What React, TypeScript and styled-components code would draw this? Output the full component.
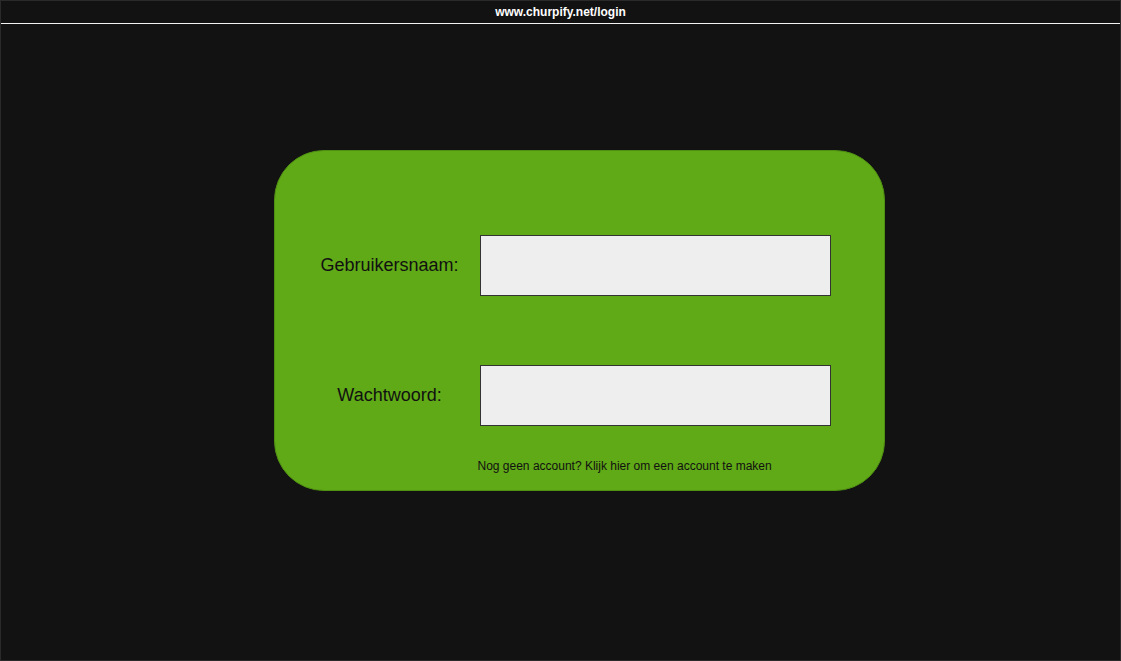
import styled, { createGlobalStyle } from 'styled-components';

const GlobalStyle = createGlobalStyle`
  html, body {
    margin: 0;
    padding: 0;
    background: #121212;
  }
  body {
    font-family: "Liberation Sans", Arial, sans-serif;
  }
`;

const Page = styled.div`
  box-sizing: border-box;
  width: 1121px;
  height: 661px;
  background: #121212;
  border: 1px solid #2a2a2a;
  display: flex;
  flex-direction: column;
`;

const AddressBar = styled.header`
  height: 22px;
  border-bottom: 1px solid #f2f2f2;
  display: flex;
  align-items: center;
  justify-content: center;
  color: #ffffff;
  font-size: 12px;
  font-weight: bold;
`;

const Stage = styled.main`
  flex: 1;
  display: flex;
  justify-content: center;
  padding: 126px 0 0 0;
  box-sizing: border-box;
`;

const Card = styled.form`
  box-sizing: border-box;
  width: 611px;
  height: 341px;
  margin-left: 37px;
  background: #60a917;
  border: 1px solid #4f8f12;
  border-radius: 50px;
  padding: 84px 53px 0 25px;
  display: grid;
  grid-template-columns: 180px 351px;
  grid-auto-rows: min-content;
  row-gap: 69px;
  align-items: center;
`;

const Label = styled.label`
  font-size: 18px;
  color: #111;
  text-align: center;
`;

const Field = styled.input`
  box-sizing: border-box;
  width: 351px;
  height: 61px;
  margin: 0;
  background: #eeeeee;
  border: 1px solid #333333;
  outline: none;
`;

const Hint = styled.a`
  grid-column: 2;
  margin-top: -58px;
  margin-left: -2px;
  font-size: 12px;
  line-height: 14px;
  color: #111;
  text-decoration: none;
  cursor: pointer;
`;

export default function App() {
  return (
    <>
      <GlobalStyle />
      <Page>
        <AddressBar>www.churpify.net/login</AddressBar>
        <Stage>
          <Card onSubmit={(e) => e.preventDefault()}>
            <Label htmlFor="username">Gebruikersnaam:</Label>
            <Field id="username" type="text" />
            <Label htmlFor="password">Wachtwoord:</Label>
            <Field id="password" type="password" />
            <Hint>Nog geen account? Klijk hier om een account te maken</Hint>
          </Card>
        </Stage>
      </Page>
    </>
  );
}
